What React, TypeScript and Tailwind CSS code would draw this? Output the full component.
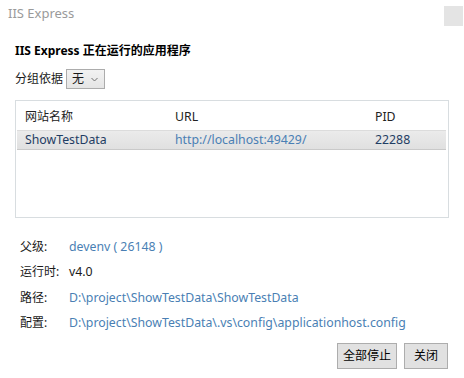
import React from 'react'

const font = '"Noto Sans", "Noto Sans CJK SC", sans-serif'

type InfoRow = { label: string; value: string; link: boolean }

const info: InfoRow[] = [
  { label: '父级:', value: 'devenv ( 26148 )', link: true },
  { label: '运行时:', value: 'v4.0', link: false },
  { label: '路径:', value: 'D:\\project\\ShowTestData\\ShowTestData', link: true },
  { label: '配置:', value: 'D:\\project\\ShowTestData\\.vs\\config\\applicationhost.config', link: true },
]

export default function App(): React.ReactElement {
  return (
    <div className="w-[464px] h-[378px] bg-white text-[12px] text-[#1a1a1a] overflow-hidden" style={{ fontFamily: font }}>
      {/* Title bar */}
      <div className="h-[27px] flex items-center justify-between pl-[8px] pr-[1px]">
        <span className="text-[13px] text-[#9a9a9a]">IIS Express</span>
        <div className="w-[19px] h-[20px] bg-[#e4e4e4] mt-[4px]" />
      </div>

      <div className="px-[15px]">
        <h1 className="mt-[14px] text-[12px] font-bold text-black leading-[20px]">IIS Express 正在运行的应用程序</h1>

        {/* Group by */}
        <div className="mt-[8px] flex items-center gap-[2px]">
          <span className="leading-[20px]">分组依据</span>
          <div className="ml-[1px] w-[39px] h-[20px] border border-[#acacac] bg-gradient-to-b from-[#f2f2f2] to-[#e5e5e5] flex items-center pl-[5px] gap-[7px]">
            <span className="text-[12px] leading-none">无</span>
            <svg width="7" height="5" viewBox="0 0 7 5" className="mt-[1px]">
              <path d="M0.5 1 L3.5 4 L6.5 1" fill="none" stroke="#707070" strokeWidth="1" />
            </svg>
          </div>
        </div>

        {/* Table */}
        <div className="mt-[11px] w-[434px] h-[118px] border border-[#d8dde0] flex flex-col">
          <div className="h-[29px] flex items-center pt-[3px] text-[12px] text-[#222]">
            <span className="pl-[9px] w-[159px]">网站名称</span>
            <span className="w-[200px] text-[12.3px]">URL</span>
            <span className="text-[12.3px]">PID</span>
          </div>
          <div className="mx-[1px] mr-[2px] h-[20px] flex items-center text-[12.3px] bg-gradient-to-b from-[#ebebeb] to-[#e0e0e0] border-t border-t-[#dcdcdc] border-b border-b-[#c9c9c9]">
            <span className="pl-[8px] w-[158px] text-[#1f3d63]">ShowTestData</span>
            <span className="w-[200px] text-[#4a7fb4]">http://localhost:49429/</span>
            <span className="text-[#1f3d63]">22288</span>
          </div>
        </div>

        {/* Info */}
        <div className="mt-[16px] pl-[5px] flex flex-col">
          {info.map((r) => (
            <div key={r.label} className="h-[25.5px] flex items-center">
              <span className="w-[49px] shrink-0">{r.label}</span>
              <span className={r.link ? 'text-[#4a7fb4] whitespace-nowrap text-[12.3px]' : 'whitespace-nowrap text-[12.3px]'}>{r.value}</span>
            </div>
          ))}
        </div>

        {/* Buttons */}
        <div className="mt-[7px] flex justify-end gap-[7px] pr-[1px]">
          <button className="w-[60px] h-[26px] border border-[#adadad] bg-[#e1e1e1] text-[12px] text-black">全部停止</button>
          <button className="w-[44px] h-[26px] border border-[#adadad] bg-[#e1e1e1] text-[12px] text-black">关闭</button>
        </div>
      </div>
    </div>
  )
}
